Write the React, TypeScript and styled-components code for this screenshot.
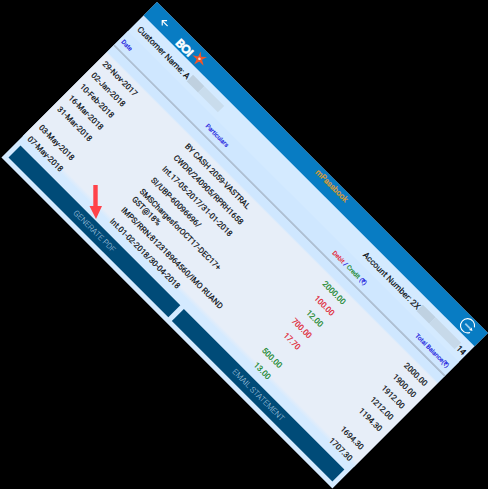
import React from "react";
import styled, { createGlobalStyle } from "styled-components";

const Global = createGlobalStyle`
  html, body { margin: 0; padding: 0; background: #000; overflow: hidden; }
  * { box-sizing: border-box; }
`;

const Stage = styled.main`
  position: relative;
  width: 488px;
  height: 489px;
  overflow: hidden;
  background: #000;
  padding: 1.5px 0 0 156.5px;
`;

const Screen = styled.section`
  width: 467.5px;
  height: 220px;
  display: flex;
  flex-direction: column;
  transform: rotate(45deg);
  transform-origin: 0 0;
  background: #d4eaff;
  color: #0c1014;
  font-family: Roboto, "Liberation Sans", sans-serif;
  white-space: nowrap;
  -webkit-text-stroke: 0.2px currentColor;
`;

const TopBar = styled.header`
  height: 19px;
  flex: none;
  display: grid;
  grid-template-columns: 42px 141px 141px 1fr;
  background: #087cc3;
`;

const BackSlot = styled.div`
  padding: 4.5px 0 0 16px;
  line-height: 0;
`;

const Brand = styled.div`
  display: flex;
  align-items: flex-start;
  gap: 1.5px;
`;

const BrandName = styled.span`
  color: #fff;
  font: 900 11.5px/13px Lato, sans-serif;
  letter-spacing: -0.5px;
  padding-top: 5.5px;
  -webkit-text-stroke: 0.5px #fff;
`;

const StarSlot = styled.span`
  line-height: 0;
  padding-top: 2px;
`;

const Title = styled.div`
  color: #d69a35;
  font-size: 8px;
  line-height: 14px;
  text-align: center;
  -webkit-text-stroke: 0.35px currentColor;
`;

const LogoutSlot = styled.div`
  display: flex;
  justify-content: flex-end;
  padding: 1px 10.5px 0 0;
`;

const AccountLine = styled.div`
  height: 22px;
  flex: none;
  display: grid;
  grid-template-columns: 319px 1fr;
  padding-left: 5.5px;
  font-size: 8.4px;
`;

const Field = styled.div`
  display: flex;
  align-items: center;
  height: 23px;
`;

const Mask = styled.span<{ $w: number; $tone: string }>`
  width: ${(p) => p.$w}px;
  height: 9.5px;
  background: ${(p) => p.$tone};
`;

const Gap = styled.span<{ $w: number }>`
  width: ${(p) => p.$w}px;
`;

const Heads = styled.div`
  height: 21px;
  flex: none;
  display: grid;
  grid-template-columns: 107px 54px 183px 1fr;
  align-items: center;
  padding: 2px 4px 0 3px;
  color: #2424e0;
  font-size: 6.2px;
  line-height: 8px;
  border-bottom: 2px solid #aebfd2;
  background: #cfe7ff;
`;

const Head = styled.span<{ $align?: string }>`
  text-align: ${(p) => p.$align || "left"};
`;

const Tone = styled.span<{ $kind: "debit" | "credit" }>`
  color: ${(p) => (p.$kind === "debit" ? "#e22b3b" : "#1c8a31")};
`;

const Table = styled.div`
  height: 127.8px;
  flex: none;
  overflow: hidden;
  padding: 11.2px 0 0 5.3px;
  background: linear-gradient(#cfe7ff 0 8px, #e7eef8 10px 122px, #d4eaff 127px);
`;

const Row = styled.div<{ $tall?: boolean }>`
  height: ${(p) => (p.$tall ? 26 : 16)}px;
  display: grid;
  grid-template-columns: 116.5px 150px 73.5px 115.5px;
  font-size: 8px;
  line-height: 16px;
`;

const Particular = styled.div`
  display: flex;
  flex-direction: column;
`;

const Continuation = styled.span`
  line-height: 10px;
  margin-top: -2.5px;
`;

const Amount = styled.span<{ $kind?: "debit" | "credit" }>`
  text-align: right;
  color: ${(p) => (p.$kind === "debit" ? "#e0202f" : p.$kind === "credit" ? "#158529" : "inherit")};
`;

const Actions = styled.footer`
  flex: 1;
  display: grid;
  grid-template-columns: 1fr 1fr;
  gap: 5px;
  padding: 8.2px 4.5px 5.5px;
`;

const Action = styled.button`
  border: 0;
  padding: 0;
  background: #004b78;
  color: #b4d0e4;
  font: 300 8px/15px Roboto, "Liberation Sans", sans-serif;
  -webkit-text-stroke: 0;
`;

const Pointer = styled.svg`
  position: absolute;
  left: 88px;
  top: 184px;
`;

type Kind = "debit" | "credit";
const rows: { date: string; text: string; more?: string; kind: Kind; amount: string; total: string }[] = [
  { date: "29-Nov-2017", text: "BY CASH 2059-VASTRAL", kind: "credit", amount: "2000.00", total: "2000.00" },
  { date: "02-Jan-2018", text: "CWDR/240905/RPRH1658", kind: "debit", amount: "100.00", total: "1900.00" },
  { date: "10-Feb-2018", text: "Int.17-05-2017/31-01-2018", kind: "credit", amount: "12.00", total: "1912.00" },
  { date: "16-Mar-2018", text: "SI/UBP-60096696/", kind: "debit", amount: "700.00", total: "1212.00" },
  { date: "31-Mar-2018", text: "SMSChargesforOCT17-DEC17+", more: "GST@18%", kind: "debit", amount: "17.70", total: "1194.30" },
  { date: "03-May-2018", text: "IMPS/RRN:812318964560/IMO RUAND", kind: "credit", amount: "500.00", total: "1694.30" },
  { date: "07-May-2018", text: "Int.01-02-2018/30-04-2018", kind: "credit", amount: "13.00", total: "1707.30" },
];

export default function App() {
  return (
    <>
      <Global />
      <Stage>
        <Screen>
          <TopBar>
            <BackSlot>
              <svg width="9" height="9" viewBox="0 0 10 10" fill="none" stroke="#fff" strokeWidth="1.3">
                <path d="M9.5 5H1.2M4.8 1.2L1 5l3.8 3.8" />
              </svg>
            </BackSlot>
            <Brand>
              <BrandName>BOI</BrandName>
              <StarSlot>
                <svg width="16" height="16" viewBox="0 0 16 16">
                  <g transform="rotate(-40 8 8)">
                    <path
                      d="M8.6 0.8L9.6 6L15.4 5.8L10.7 9L12.8 14.8L8.1 11L3.2 14.3L5.4 9L0.8 5.2L6.6 6Z"
                      fill="#f0562a"
                    />
                    <circle cx="8" cy="8.2" r="1.3" fill="#f6ddc8" />
                  </g>
                </svg>
              </StarSlot>
            </Brand>
            <Title>mPassbook</Title>
            <LogoutSlot>
              <svg width="17" height="17" viewBox="0 0 17 17" fill="none" stroke="#fff">
                <path d="M14.6 4.6A7.1 7.1 0 1 0 15 11.3" strokeWidth="1.1" />
                <path d="M5.5 8.5H12.5" strokeWidth="1.8" stroke="#9fcdec" />
                <path d="M12.6 6.6L15.6 8.5L12.6 10.4Z" fill="#fff" stroke="none" />
              </svg>
            </LogoutSlot>
          </TopBar>
          <AccountLine>
            <Field>
              Customer Name: A
              <Gap $w={1} />
              <Mask $w={16} $tone="#bfd0df" />
              <Mask $w={28} $tone="#c9dcec" />
            </Field>
            <Field>
              Account Number: 2X
              <Mask $w={18} $tone="#bfd1e1" />
              <Mask $w={36} $tone="#c7d9e9" />
              <Gap $w={1} />
              14
            </Field>
          </AccountLine>
          <Heads>
            <Head>Date</Head>
            <Head $align="center">Particulars</Head>
            <Head $align="right">
              <Tone $kind="debit">Debit</Tone> / <Tone $kind="credit">Credit</Tone> (₹)
            </Head>
            <Head $align="right">Total Balance(₹)</Head>
          </Heads>
          <Table>
            {rows.map((r) => (
              <Row key={r.date} $tall={!!r.more}>
                <span>{r.date}</span>
                <Particular>
                  <span>{r.text}</span>
                  {r.more && <Continuation>{r.more}</Continuation>}
                </Particular>
                <Amount $kind={r.kind}>{r.amount}</Amount>
                <Amount>{r.total}</Amount>
              </Row>
            ))}
          </Table>
          <Actions>
            <Action>GENERATE PDF</Action>
            <Action>EMAIL STATEMENT</Action>
          </Actions>
        </Screen>
        <Pointer width="16" height="36" viewBox="0 0 16 36">
          <path d="M5.3 1H9.7V22H14L8 35L1.5 22H5.3Z" fill="#ff4249" />
        </Pointer>
      </Stage>
    </>
  );
}
